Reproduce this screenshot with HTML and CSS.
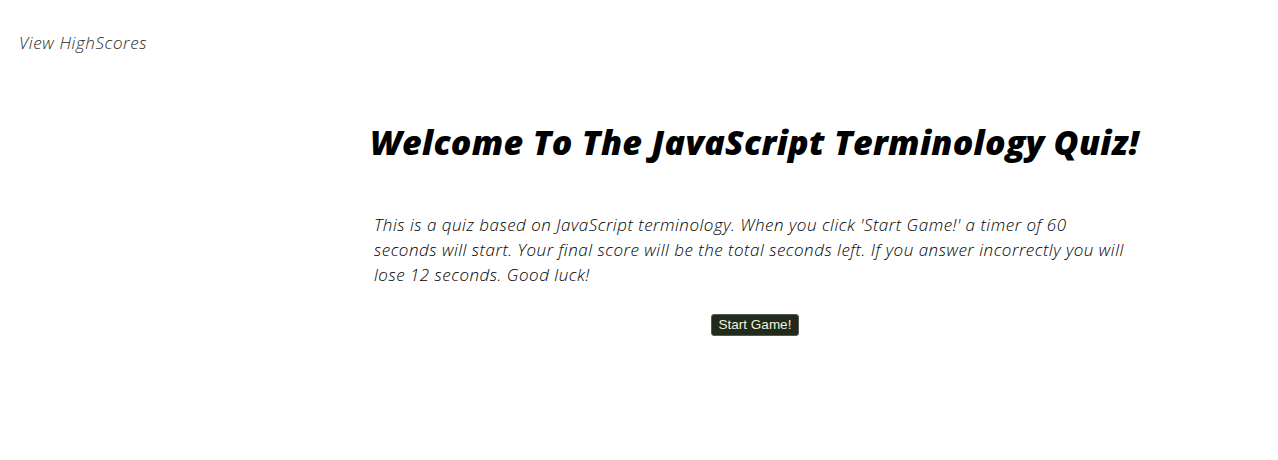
FILE: index.html
```html
<!DOCTYPE html>
<html lang="en">
<head>
<meta charset="utf-8">
<title>JavaScript Terminology Quiz</title>
<link rel="stylesheet" href="styles.css">
</head>
<body>
<header class="top">
  <a class="highscores" href="#">View HighScores</a>
</header>
<main class="quiz">
  <h1 class="title">Welcome To The JavaScript Terminology Quiz!</h1>
  <p class="intro">This is a quiz based on JavaScript terminology. When you click 'Start Game!' a timer of 60 seconds will start. Your final score will be the total seconds left. If you answer incorrectly you will lose 12 seconds. Good luck!</p>
  <div class="actions">
    <button class="start" type="button">Start Game!</button>
  </div>
</main>
</body>
</html>
```

FILE: styles.css
```css
html, body {
  margin: 0;
  padding: 0;
  background: #ffffff;
}
body {
  font-family: "Open Sans", "Noto Sans", sans-serif;
  color: #000;
}
.top {
  padding: 31px 0 0 19px;
  height: 40px;
}
.highscores {
  font-family: "Open Sans", sans-serif;
  font-style: italic;
  font-weight: 300;
  font-size: 17px;
  letter-spacing: 0.6px;
  color: #2a2a24;
  text-decoration: none;
}
.quiz {
  margin-left: 370px;
  width: 766px;
  display: flex;
  flex-direction: column;
}
.title {
  margin: 50px 0 0 0;
  font-family: "Open Sans", sans-serif;
  font-style: italic;
  font-weight: 800;
  font-size: 34px;
  line-height: 42px;
  letter-spacing: 0.3px;
  white-space: nowrap;
}
.intro {
  margin: 49px 0 0 4px;
  width: 754px;
  font-family: "Open Sans", sans-serif;
  font-style: italic;
  font-weight: 300;
  font-size: 17px;
  line-height: 25px;
  letter-spacing: 0.5px;
  color: #000;
}
.actions {
  display: flex;
  justify-content: center;
  margin: 27px 0 0 4px;
}
.start {
  font-family: "Liberation Sans", Arial, sans-serif;
  font-size: 13.5px;
  color: #f2f2dc;
  background: #212a1b;
  border: 1px solid #55584e;
  border-radius: 3px;
  padding: 2px 7px;
  line-height: 16px;
}
```
